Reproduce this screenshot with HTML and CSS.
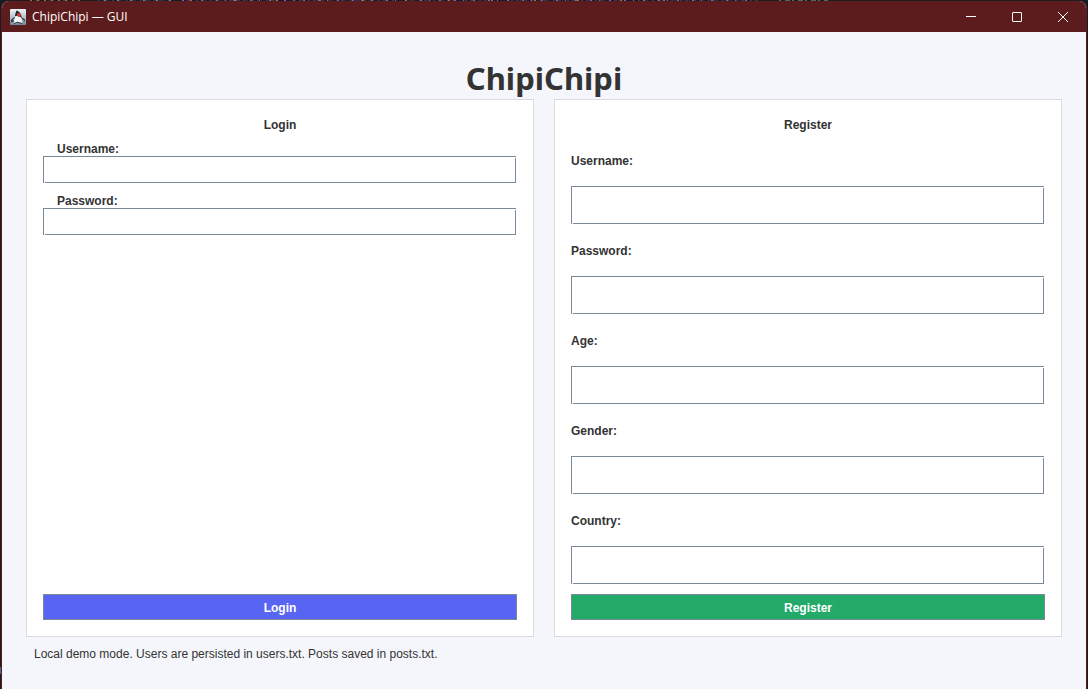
FILE: index.html
```html
<!DOCTYPE html>
<html lang="en">
<head>
<meta charset="utf-8">
<title>ChipiChipi — GUI</title>
<link rel="stylesheet" href="styles.css">
</head>
<body>
<svg class="backdrop" aria-hidden="true">
  <g stroke-width="1">
    <path d="M30 .5H80M98 .5H172M182 .5H276M294 .5H395M405 .5H456M465 .5H490M511 .5H620M638 .5H758" stroke="#3c3644" stroke-dasharray="2 3 3 1 1 4"/>
    <path d="M30 .5H80" stroke="#a06a3c" stroke-dasharray="2 5"/>
    <path d="M104 .5H172" stroke="#5b8aa0" stroke-dasharray="2 11"/>
    <path d="M182 .5H758" stroke="#7a62b8" stroke-dasharray="2 7 1 9 2 13"/>
    <path d="M190 .5H700" stroke="#b0664e" stroke-dasharray="2 41"/>
    <path d="M779 .5H828" stroke="#5c6366" stroke-dasharray="2 4 5 2"/>
    <path d="M0 670.5H1" stroke="#3c6ea0" stroke-width="7"/>
  </g>
</svg>
<div class="window">
  <header class="titlebar">
    <svg class="app-icon" viewBox="0 0 16 16" aria-hidden="true">
      <defs><linearGradient id="tile" x2="0" y2="1"><stop stop-color="#eef2f5"/><stop offset=".5" stop-color="#b9c5cf"/><stop offset="1" stop-color="#71899b"/></linearGradient></defs>
      <rect width="16" height="16" rx="1" fill="url(#tile)"/>
      <path d="M6.5 1.5C8 2 11 3.5 11.5 8L12 9.5H5C4.7 6.5 5.5 3.5 6.5 1.5Z" fill="#25282b"/>
      <path d="M5 7.5 6.8 6.8 10.5 8 11.8 9.5 12 14.5 9.5 13.3 7.5 13 4.3 14.5 4.2 10Z" fill="#f4f6f8"/>
      <path d="M4.7 8.5 1.8 10.8 1.5 12.5 4 11.6M11.8 9.3 14 10.5 14.5 12.3" fill="none" stroke="#30363b" stroke-width="1.2"/>
      <path d="M4.2 14.6 7.4 13.2 12.2 14.6" fill="none" stroke="#2c3338" stroke-width="1"/>
      <circle cx="8.8" cy="5.9" r="1.8" fill="#df332c"/>
    </svg>
    <span class="caption">ChipiChipi — GUI</span>
    <button class="control" type="button" aria-label="Minimize"><svg viewBox="0 0 10 10"><path d="M0 4.5H10"/></svg></button>
    <button class="control" type="button" aria-label="Maximize"><svg viewBox="0 0 10 10"><rect x=".5" y=".5" width="9" height="9" rx=".5"/></svg></button>
    <button class="control" type="button" aria-label="Close"><svg viewBox="0 0 10 10"><path d="M0 0 10 10M10 0 0 10"/></svg></button>
  </header>
  <main class="content">
    <h1 class="brand">ChipiChipi</h1>
    <div class="panels">
      <form class="panel login">
        <h2 class="panel-title">Login</h2>
        <label class="label" for="login-user">Username:</label>
        <input class="field" id="login-user" type="text">
        <label class="label" for="login-pass">Password:</label>
        <input class="field" id="login-pass" type="password">
        <button class="submit" type="button">Login</button>
      </form>
      <form class="panel register">
        <h2 class="panel-title">Register</h2>
        <div class="fields">
          <label class="label" for="reg-user">Username:</label>
          <input class="field" id="reg-user" type="text">
          <label class="label" for="reg-pass">Password:</label>
          <input class="field" id="reg-pass" type="password">
          <label class="label" for="reg-age">Age:</label>
          <input class="field" id="reg-age" type="text">
          <label class="label" for="reg-gender">Gender:</label>
          <input class="field" id="reg-gender" type="text">
          <label class="label" for="reg-country">Country:</label>
          <input class="field" id="reg-country" type="text">
        </div>
        <button class="submit" type="button">Register</button>
      </form>
    </div>
    <p class="status">Local demo mode. Users are persisted in users.txt. Posts saved in posts.txt.</p>
  </main>
</div>
</body>
</html>
```
FILE: styles.css
```css
* {
  box-sizing: border-box;
}

body {
  margin: 0;
  min-height: 100vh;
  display: flex;
  padding: 1px 1px 0;
  background: #1a1c20;
  color: #333;
  font: 12px/16px "Liberation Sans", Arial, sans-serif;
}

.backdrop {
  position: absolute;
  inset: 0;
  width: 100%;
  height: 100%;
}

.window {
  position: relative;
  flex: 1;
  display: flex;
  flex-direction: column;
  border: solid #5c1c1d;
  border-width: 0 1px;
  border-radius: 8px 8px 0 0;
  overflow: hidden;
  background: #f5f6fb;
}

.titlebar {
  display: flex;
  align-items: center;
  height: 31px;
  padding-left: 8px;
  background: #5c1c1d;
  color: #fff;
}

.app-icon {
  width: 16px;
  height: 16px;
  margin-right: 6px;
}

.caption {
  flex: 1;
  font-family: "Open Sans", "Noto Sans", sans-serif;
}

.control {
  width: 46px;
  height: 31px;
  padding: 0;
  border: 0;
  background: none;
  display: grid;
  place-items: center;
}

.control svg {
  width: 10px;
  height: 10px;
  fill: none;
  stroke: #fff;
}

.content {
  flex: 1;
  display: flex;
  flex-direction: column;
  padding: 24px;
}

.brand {
  margin: 0;
  padding-top: 2px;
  font: bold 31px/41px "Noto Sans", "Open Sans", sans-serif;
  text-align: center;
}

.panels {
  flex: 1;
  display: grid;
  grid-template-columns: 1fr 1fr;
  gap: 20px;
}

.panel {
  display: flex;
  flex-direction: column;
  padding: 16px;
  border: 1px solid #dadbdd;
  background: #fff;
}

.panel-title {
  margin: 0;
  font-size: 12px;
  line-height: 18px;
  text-align: center;
}

.label {
  font-weight: bold;
}

.field {
  --line: linear-gradient(#7a8a99, #7a8a99);
  height: 27px;
  margin: 0 1px 0 0;
  padding: 0 6px;
  border: 0;
  background:
    var(--line) 0 0 / 1px 100% no-repeat,
    var(--line) 0 0 / 100% 1px no-repeat,
    var(--line) 2px 100% / 100% 1px no-repeat,
    var(--line) 100% 2px / 1px 100% no-repeat,
    #fff;
  font: inherit;
}

.login .label {
  margin: 8px 0 0 14px;
  line-height: 14px;
}

.login .field + .label {
  margin-top: 11px;
}

.submit {
  height: 26px;
  margin-top: auto;
  padding: 2px 0 0;
  border: 1px solid #7a8a99;
  border-radius: 0;
  background: #5865f2;
  color: #fff;
  font: inherit;
  font-weight: bold;
}

.register .submit {
  background: #23a968;
}

.fields {
  flex: 1;
  display: grid;
  grid-auto-rows: 1fr;
  gap: 7px;
  align-items: center;
  margin: 7px 0 10px;
}

.fields .label {
  padding-top: 2px;
}

.fields .field {
  height: 100%;
}

.status {
  margin: 8px 8px 2px;
  padding-top: 1px;
  line-height: 17px;
}
```
